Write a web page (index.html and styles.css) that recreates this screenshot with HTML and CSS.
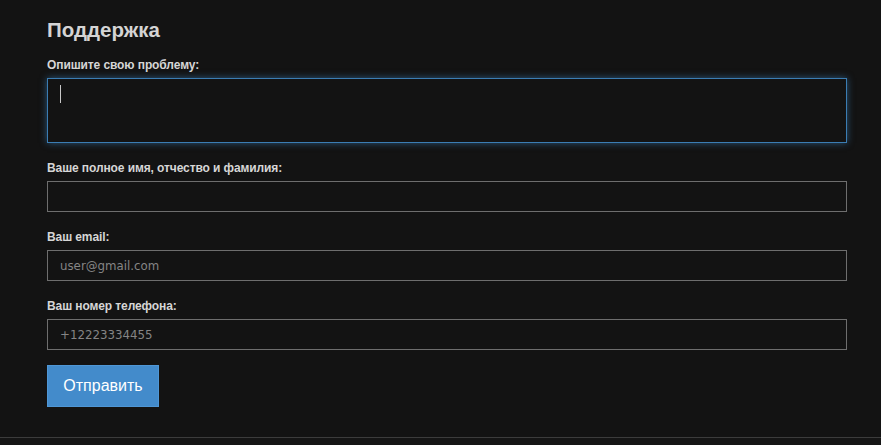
FILE: index.html
```html
<!DOCTYPE html>
<html lang="ru">
<head>
<meta charset="utf-8">
<title>Поддержка</title>
<link rel="stylesheet" href="styles.css">
</head>
<body>
<main class="page">
  <form class="support-form">
    <h1 class="title">Поддержка</h1>
    <div class="field">
      <label class="label" for="problem">Опишите свою проблему:</label>
      <div class="textarea-wrap">
        <textarea id="problem" class="textarea focused"></textarea>
        <span class="caret"></span>
      </div>
    </div>
    <div class="field">
      <label class="label" for="name">Ваше полное имя, отчество и фамилия:</label>
      <input id="name" class="input" type="text">
    </div>
    <div class="field">
      <label class="label" for="email">Ваш email:</label>
      <input id="email" class="input" type="email" placeholder="user@gmail.com">
    </div>
    <div class="field">
      <label class="label" for="phone">Ваш номер телефона:</label>
      <input id="phone" class="input" type="tel" placeholder="+12223334455">
    </div>
    <button class="submit" type="button">Отправить</button>
  </form>
</main>
<footer class="footer"></footer>
</body>
</html>
```

FILE: styles.css
```css
html, body {
  margin: 0;
  padding: 0;
  background: #131313;
}

body {
  font-family: "Liberation Sans", Arial, sans-serif;
  color: #dcdcdc;
}

.page {
  padding: 18px 0 30px 47px;
}

.support-form {
  width: 800px;
  display: flex;
  flex-direction: column;
}

.title {
  margin: 0;
  font-size: 20.5px;
  line-height: 24px;
  font-weight: bold;
  color: #d4d4d4;
}

.field {
  display: flex;
  flex-direction: column;
  margin-top: 17px;
}

.field:first-of-type {
  margin-top: 15px;
}

.label {
  display: block;
  font-size: 12px;
  line-height: 16px;
  font-weight: bold;
  letter-spacing: -0.1px;
  color: #d6d6d6;
  margin-bottom: 5px;
}

.textarea-wrap {
  position: relative;
}

.textarea {
  display: block;
  width: 100%;
  height: 65px;
  box-sizing: border-box;
  margin: 0;
  padding: 6px 12px;
  background: #131313;
  color: #ddd;
  font-family: "DejaVu Sans", sans-serif;
  font-size: 12px;
  border: 1px solid #3b7db3;
  border-radius: 0;
  outline: none;
  resize: none;
  box-shadow: 0 0 7px rgba(62, 140, 205, 0.55);
}

.caret {
  position: absolute;
  left: 13px;
  top: 7px;
  width: 1px;
  height: 18px;
  background: #c8c8c8;
}

.input {
  display: block;
  width: 100%;
  height: 31px;
  box-sizing: border-box;
  margin: 0;
  padding: 0 12px;
  background: #131313;
  color: #ddd;
  font-family: "DejaVu Sans", sans-serif;
  font-size: 11.8px;
  border: 1px solid #6e6e6e;
  border-radius: 0;
  outline: none;
}

.input::placeholder {
  color: #858585;
}

.submit {
  align-self: flex-start;
  margin-top: 15px;
  width: 112px;
  height: 42px;
  padding: 0;
  background: #438bcb;
  border: 1px solid #4f97d6;
  border-radius: 0;
  color: #ffffff;
  font-family: "Liberation Sans", Arial, sans-serif;
  font-size: 16px;
  cursor: pointer;
}

.footer {
  border-top: 1px solid #3c3c3c;
  height: 8px;
  background: #151515;
}
```
